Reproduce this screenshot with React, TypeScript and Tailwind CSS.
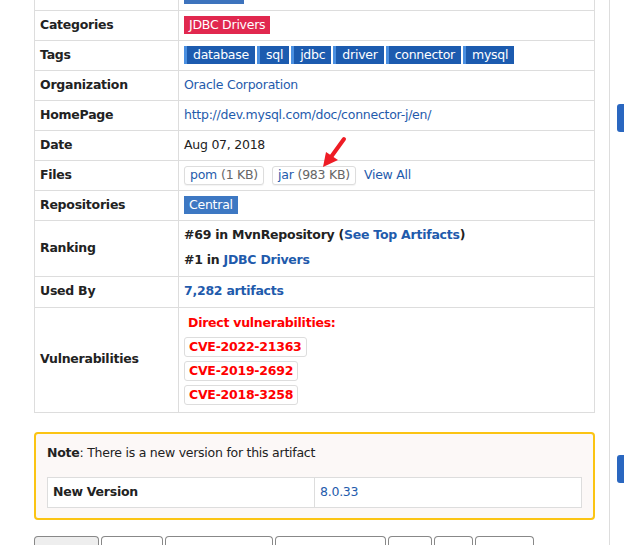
import { Fragment } from "react";

const font = { fontFamily: 'Tahoma, "DejaVu Sans", Verdana, sans-serif' };

const tags = ["database", "sql", "jdbc", "driver", "connector", "mysql"];
const cves = ["CVE-2022-21363", "CVE-2019-2692", "CVE-2018-3258"];

function Row({ label, children, h = "h-[30px]" }: { label: string; children: React.ReactNode; h?: string }) {
  return (
    <tr className={h}>
      <th className="w-[144px] border border-[#ddd] pl-[5px] text-left align-middle font-bold text-[#222]">{label}</th>
      <td className="border border-[#ddd] pl-[5px] align-middle">{children}</td>
    </tr>
  );
}

function FileBadge({ name, size }: { name: string; size: string }) {
  return (
    <span className="inline-flex h-[19px] items-center rounded-[3px] border border-[#ddd] bg-white px-[5px] shadow-[0_1px_1px_rgba(0,0,0,.05)]">
      <span className="text-[#1f5bac]">{name}</span>
      <span className="ml-1 text-[#666]">({size})</span>
    </span>
  );
}

export default function App() {
  return (
    <div className="relative h-[545px] w-[624px] overflow-hidden bg-white text-[12.5px] tracking-[-0.25px] text-[#222]" style={font}>
      <div className="flex">
        <div className="ml-[34px] w-[561px]">
          <table className="w-full border-collapse">
            <tbody>
              <tr className="h-[10px]">
                <th className="w-[144px] border border-t-0 border-[#ddd]" />
                <td className="border border-t-0 border-[#ddd] pl-[5px] align-top">
                  <div className="h-[4px] w-[60px] bg-[#3d73bd]" />
                </td>
              </tr>
              <Row label="Categories">
                <span className="inline-flex h-[18px] items-center bg-[#e1284f] px-[5px] text-white">JDBC Drivers</span>
              </Row>
              <Row label="Tags">
                <div className="flex gap-[2px]">
                  {tags.map((t) => (
                    <span key={t} className="inline-flex h-[18px] items-center border-l-[3px] border-[#4a8fe0] bg-[#1c5baf] pl-[6px] pr-[6px] text-white">{t}</span>
                  ))}
                </div>
              </Row>
              <Row label="Organization">
                <span className="text-[#1f5bac]">Oracle Corporation</span>
              </Row>
              <Row label="HomePage">
                <span className="text-[#1f5bac]">http://dev.mysql.com/doc/connector-j/en/</span>
              </Row>
              <Row label="Date">Aug 07, 2018</Row>
              <Row label="Files">
                <div className="flex items-center gap-[8px]">
                  <FileBadge name="pom" size="1 KB" />
                  <FileBadge name="jar" size="983 KB" />
                  <span className="text-[#1f5bac]">View All</span>
                </div>
              </Row>
              <Row label="Repositories">
                <span className="inline-flex h-[18px] items-center bg-[#3d78c3] px-[5px] text-white">Central</span>
              </Row>
              <Row label="Ranking" h="h-[56px]">
                <div className="flex flex-col gap-[6px] font-bold">
                  <span>#69 in MvnRepository (<span className="text-[#1f5bac]">See Top Artifacts</span>)</span>
                  <span>#1 in <span className="text-[#1f5bac]">JDBC Drivers</span></span>
                </div>
              </Row>
              <Row label="Used By" h="h-[31px]">
                <span className="font-bold text-[#1f5bac]">7,282 artifacts</span>
              </Row>
              <Row label="Vulnerabilities" h="h-[105px]">
                <div className="flex flex-col items-start gap-[4px]">
                  <span className="mb-[1px] pl-[4px] font-bold text-[#f00]">Direct vulnerabilities:</span>
                  {cves.map((c) => (
                    <Fragment key={c}>
                      <span className="inline-flex h-[20px] items-center rounded-[3px] border border-[#ddd] bg-white px-[4px] font-bold text-[#f00]">{c}</span>
                    </Fragment>
                  ))}
                </div>
              </Row>
            </tbody>
          </table>

          <div className="mt-[19px] rounded-[4px] border-2 border-[#fbc413] bg-[#fcf8f7] px-[11px] pt-[10px] pb-[10px]">
            <p>
              <b>Note</b>: There is a new version for this artifact
            </p>
            <table className="mt-[15px] w-full border-collapse bg-white">
              <tbody>
                <tr className="h-[30px]">
                  <th className="w-[267px] border border-[#ddd] pl-[5px] text-left font-bold">New Version</th>
                  <td className="border border-[#ddd] pl-[5px] text-[#1f5bac]">8.0.33</td>
                </tr>
              </tbody>
            </table>
          </div>

          <div className="mt-[16px] flex gap-[2px]">
            {[65, 62, 108, 111, 44, 39, 59].map((w, i) => (
              <div
                key={i}
                className={`h-[12px] shrink-0 rounded-t-[4px] border border-b-0 border-[#888] ${i === 0 ? "bg-[#eee]" : "bg-white"}`}
                style={{ width: w }}
              />
            ))}
          </div>
        </div>

        <div className="ml-[14px] flex h-[545px] flex-1 border-l border-[#ddd]">
          <div className="ml-[7px] flex flex-1 flex-col">
            <div className="mt-[104px] h-[28px] rounded-l-[3px] bg-[#2a67c0]" />
            <div className="mt-[323px] h-[28px] rounded-l-[3px] bg-[#2a67c0]" />
          </div>
        </div>
      </div>

      <svg className="absolute left-[318px] top-[136px]" width="30" height="34" viewBox="0 0 30 34">
        <path d="M26 3 L13 21" stroke="#ee1c25" strokeWidth="4" strokeLinecap="round" />
        <path d="M5 31 L8 16 L20 24 Z" fill="#ee1c25" />
      </svg>
    </div>
  );
}
